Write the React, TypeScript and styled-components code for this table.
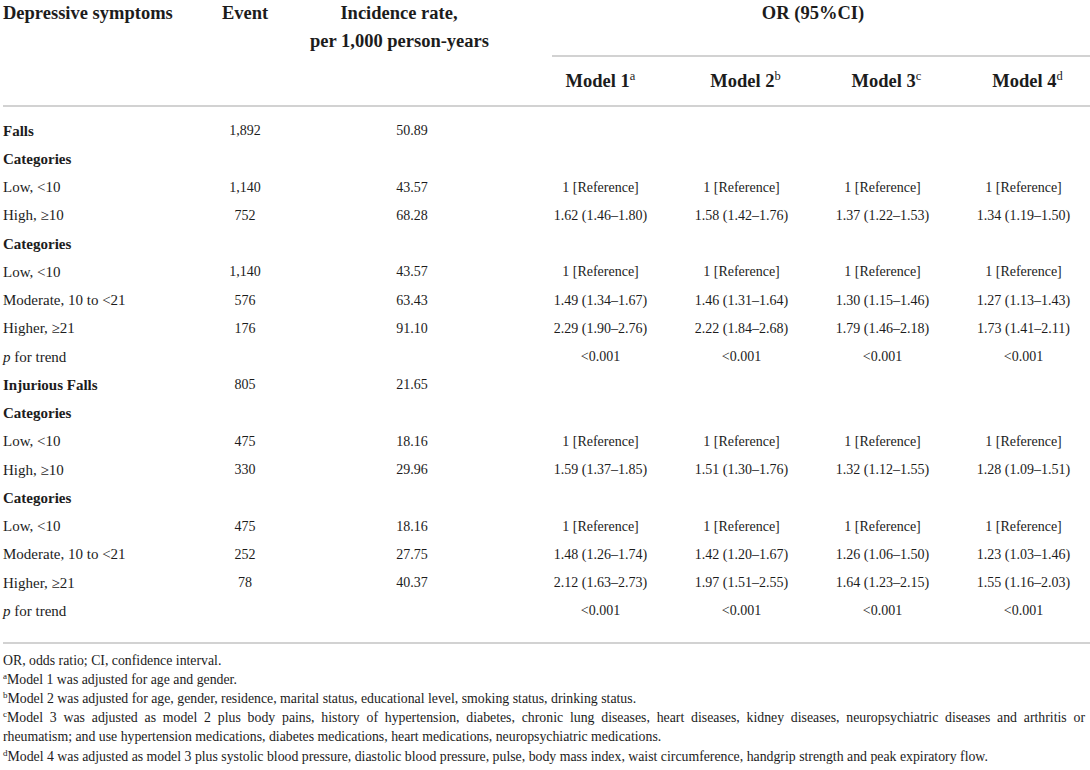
import React from "react";
import styled, { createGlobalStyle } from "styled-components";

const Global = createGlobalStyle`
  html, body { margin: 0; padding: 0; background: #fff; }
  body { overflow: hidden; font-family: "Liberation Serif", "Times New Roman", serif; color: #1c1c1c; }
`;

const COLS = "177px 130px 220px repeat(4, 141px)";

const Page = styled.div`
  width: 1094px;
`;

const Header = styled.div`
  display: grid;
  grid-template-columns: ${COLS};
  grid-template-rows: 57px 48px;
  border-bottom: 2px solid #d2d2d2;
  margin-left: 3px;
  font-weight: 700;
  font-size: 18.5px;
`;

const HeadCell = styled.div<{ $col: number; $align?: string; $padRight?: number }>`
  grid-column: ${(p) => p.$col};
  grid-row: 1 / 3;
  text-align: ${(p) => p.$align || "center"};
  padding-right: ${(p) => p.$padRight || 0}px;
  line-height: 28px;
  margin-top: -1px;
  white-space: nowrap;
`;

const SpanHead = styled.div`
  grid-column: 4 / 8;
  grid-row: 1;
  text-align: center;
  line-height: 28px;
  margin-top: -1px;
  margin-left: 22px;
  padding-right: 20px;
  border-bottom: 2px solid #d2d2d2;
`;

const ModelHead = styled.div<{ $col: number }>`
  grid-column: ${(p) => p.$col};
  grid-row: 2;
  text-align: center;
  line-height: 48px;
  padding-left: ${(p) => (p.$col === 4 ? 0 : 8)}px;
  white-space: nowrap;
`;

const Sup = styled.span`
  font-size: 12.5px;
  font-weight: 400;
  vertical-align: 7px;
  line-height: 0;
`;

const Body = styled.div`
  padding: 10px 0 16px;
  margin-left: 3px;
  border-bottom: 2px solid #d2d2d2;
`;

const Row = styled.div`
  display: grid;
  grid-template-columns: ${COLS};
  height: 28.25px;
  align-items: center;
  font-size: 14px;
`;

const Label = styled.div<{ $bold?: boolean }>`
  font-weight: ${(p) => (p.$bold ? 700 : 400)};
  font-size: 15px;
  white-space: nowrap;
`;

const Num = styled.div<{ $pr?: number }>`
  text-align: center;
  padding-right: ${(p) => p.$pr || 0}px;
  white-space: nowrap;
`;

const Notes = styled.div`
  padding: 7px 5px 0 3px;
  width: 1082px;
  font-size: 13.8px;
  line-height: 19.2px;
`;

const Note = styled.div<{ $justify?: boolean }>`
  text-align: ${(p) => (p.$justify ? "justify" : "left")};
  text-align-last: ${(p) => (p.$justify ? "justify" : "auto")};
  white-space: nowrap;
`;

const NoteSup = styled.span`
  font-size: 9px;
  vertical-align: 5px;
  line-height: 0;
`;

type R = {
  label: React.ReactNode;
  bold?: boolean;
  event?: string;
  rate?: string;
  ors?: string[];
};

const REF = ["1 [Reference]", "1 [Reference]", "1 [Reference]", "1 [Reference]"];
const P = ["<0.001", "<0.001", "<0.001", "<0.001"];

const rows: R[] = [
  { label: "Falls", bold: true, event: "1,892", rate: "50.89" },
  { label: "Categories", bold: true },
  { label: "Low, <10", event: "1,140", rate: "43.57", ors: REF },
  { label: "High, ≥10", event: "752", rate: "68.28", ors: ["1.62 (1.46–1.80)", "1.58 (1.42–1.76)", "1.37 (1.22–1.53)", "1.34 (1.19–1.50)"] },
  { label: "Categories", bold: true },
  { label: "Low, <10", event: "1,140", rate: "43.57", ors: REF },
  { label: "Moderate, 10 to <21", event: "576", rate: "63.43", ors: ["1.49 (1.34–1.67)", "1.46 (1.31–1.64)", "1.30 (1.15–1.46)", "1.27 (1.13–1.43)"] },
  { label: "Higher, ≥21", event: "176", rate: "91.10", ors: ["2.29 (1.90–2.76)", "2.22 (1.84–2.68)", "1.79 (1.46–2.18)", "1.73 (1.41–2.11)"] },
  { label: <><i>p</i> for trend</>, ors: P },
  { label: "Injurious Falls", bold: true, event: "805", rate: "21.65" },
  { label: "Categories", bold: true },
  { label: "Low, <10", event: "475", rate: "18.16", ors: REF },
  { label: "High, ≥10", event: "330", rate: "29.96", ors: ["1.59 (1.37–1.85)", "1.51 (1.30–1.76)", "1.32 (1.12–1.55)", "1.28 (1.09–1.51)"] },
  { label: "Categories", bold: true },
  { label: "Low, <10", event: "475", rate: "18.16", ors: REF },
  { label: "Moderate, 10 to <21", event: "252", rate: "27.75", ors: ["1.48 (1.26–1.74)", "1.42 (1.20–1.67)", "1.26 (1.06–1.50)", "1.23 (1.03–1.46)"] },
  { label: "Higher, ≥21", event: "78", rate: "40.37", ors: ["2.12 (1.63–2.73)", "1.97 (1.51–2.55)", "1.64 (1.23–2.15)", "1.55 (1.16–2.03)"] },
  { label: <><i>p</i> for trend</>, ors: P },
];

export default function App() {
  return (
    <Page>
      <Global />
      <Header>
        <HeadCell $col={1} $align="left">Depressive symptoms</HeadCell>
        <HeadCell $col={2}>Event</HeadCell>
        <HeadCell $col={3} $padRight={42}>
          Incidence rate,
          <br />
          per 1,000 person-years
        </HeadCell>
        <SpanHead>OR (95%CI)</SpanHead>
        {["a", "b", "c", "d"].map((s, i) => (
          <ModelHead key={s} $col={4 + i}>
            Model {i + 1}
            <Sup>{s}</Sup>
          </ModelHead>
        ))}
      </Header>
      <Body>
        {rows.map((r, i) => (
          <Row key={i}>
            <Label $bold={r.bold}>{r.label}</Label>
            <Num>{r.event}</Num>
            <Num $pr={16}>{r.rate}</Num>
            {(r.ors || ["", "", "", ""]).map((o, j) => (
              <Num key={j}>{o}</Num>
            ))}
          </Row>
        ))}
      </Body>
      <Notes>
        <Note>OR, odds ratio; CI, confidence interval.</Note>
        <Note>
          <NoteSup>a</NoteSup>Model 1 was adjusted for age and gender.
        </Note>
        <Note>
          <NoteSup>b</NoteSup>Model 2 was adjusted for age, gender, residence, marital status, educational level, smoking status, drinking status.
        </Note>
        <Note $justify>
          <NoteSup>c</NoteSup>Model 3 was adjusted as model 2 plus body pains, history of hypertension, diabetes, chronic lung diseases, heart diseases, kidney diseases, neuropsychiatric diseases and arthritis or
        </Note>
        <Note>
          rheumatism; and use hypertension medications, diabetes medications, heart medications, neuropsychiatric medications.
        </Note>
        <Note>
          <NoteSup>d</NoteSup>Model 4 was adjusted as model 3 plus systolic blood pressure, diastolic blood pressure, pulse, body mass index, waist circumference, handgrip strength and peak expiratory flow.
        </Note>
      </Notes>
    </Page>
  );
}
